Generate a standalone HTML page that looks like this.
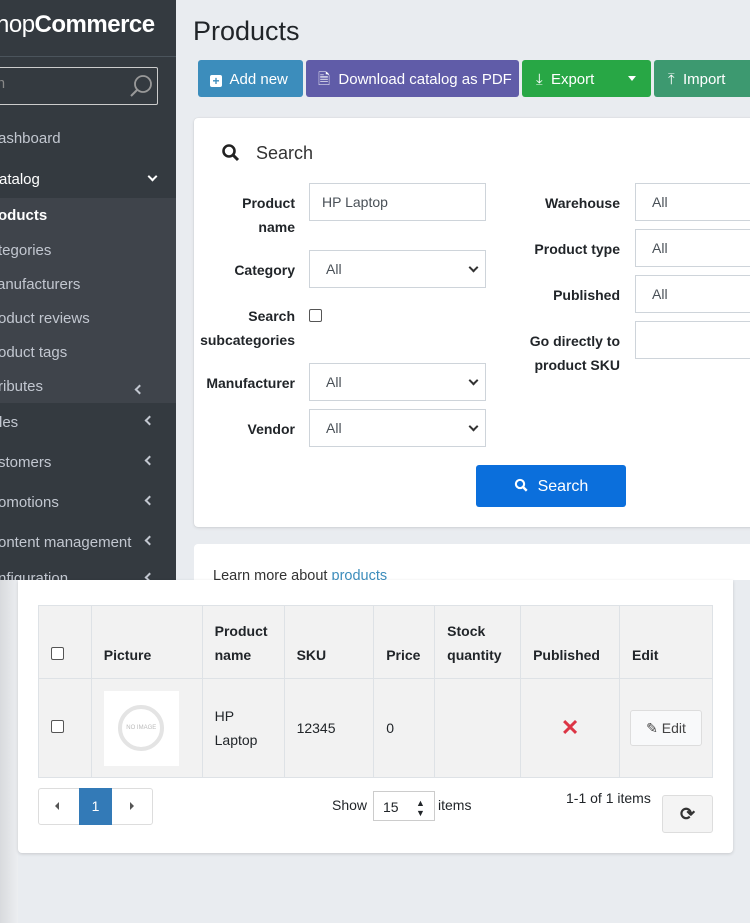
<!DOCTYPE html>
<html><head><meta charset="utf-8"><style>
*{box-sizing:border-box;margin:0;padding:0}
body{width:750px;height:923px;overflow:hidden;background:#e9ecf0;font-family:"Liberation Sans",sans-serif;font-size:14px;color:#212529;position:relative}
.a{position:absolute;white-space:nowrap}
.side{position:absolute;left:0;top:0;width:176px;height:580px;background:#343a40;overflow:hidden;color:#c2c7d0;font-size:14.5px}
.side .it{position:absolute;left:0}
.chev{position:absolute;left:146px;width:7px;height:7px;border-left:2px solid #c2c7d0;border-bottom:2px solid #c2c7d0;transform:rotate(45deg)}
.btn{position:absolute;top:60px;height:37px;border-radius:3px;color:#fff;font-size:15px;line-height:39px;padding-left:12px}
.lbl{position:absolute;text-align:right;font-weight:bold;font-size:14px;line-height:24px;color:#212529}
.inp{position:absolute;height:38px;border:1px solid #ced4da;background:#fff;font-size:14px;color:#495057;line-height:36px;padding-left:12px}
.sel::after{content:"";position:absolute;right:8px;top:13px;width:5px;height:5px;border-right:2px solid #333;border-bottom:2px solid #333;transform:rotate(45deg)}
table{position:absolute;left:38px;top:605px;width:675px;border-collapse:collapse;font-size:14px}
td,th{border:1px solid #dee2e6;background:#f2f2f2;padding:0 12px;text-align:left;line-height:24px}
th{font-weight:bold;height:73px;vertical-align:bottom;padding-bottom:11px}
td{height:99px}
.cb{display:inline-block;width:13px;height:13px;border:1px solid #555;border-radius:2px;background:#fff}
</style></head><body>
<div class="side">
 <div class="a" style="left:-4px;top:11px;color:#fff;font-size:24px;letter-spacing:-0.5px">nop<b>Commerce</b></div>
 <div class="a" style="left:0;top:56px;width:176px;height:1px;background:#4b545c"></div>
 <div class="a" style="left:-2px;top:67px;width:160px;height:38px;border:1px solid #ccc;border-radius:2px"></div>
 <div class="a" style="left:-3px;top:76px;color:#888">n</div>
 <svg class="a" style="left:128px;top:73px" width="26" height="26" viewBox="0 0 26 26"><circle cx="15" cy="11" r="8" fill="none" stroke="#999" stroke-width="1.8"/><line x1="9" y1="17" x2="3" y2="23" stroke="#999" stroke-width="2"/></svg>
 <div class="it a" style="top:130px;left:-2px;font-size:15px">ashboard</div>
 <div class="it a" style="top:171px;left:-1px;color:#fff;font-size:15px">atalog</div><div class="chev" style="top:173px;left:149px;transform:rotate(-45deg);border-color:#fff"></div>
 <div class="a" style="left:0;top:198px;width:176px;height:205px;background:#3f444b"></div>
 <div class="it a" style="top:207px;left:-2px;color:#fff;font-weight:bold;font-size:15px">oducts</div>
 <div class="it a" style="top:242px;left:-2px;font-size:15px">tegories</div>
 <div class="it a" style="top:276px;left:-3px;font-size:15px">anufacturers</div>
 <div class="it a" style="top:310px;left:-2px;font-size:15px">oduct reviews</div>
 <div class="it a" style="top:344px;left:-2px;font-size:15px">oduct tags</div>
 <div class="it a" style="top:378px;left:-2px;font-size:15px">ributes</div><div class="chev" style="top:386px;left:136px"></div>
 <div class="it a" style="top:414px;left:-1px;font-size:15px">les</div><div class="chev" style="top:417px"></div>
 <div class="it a" style="top:454px;left:-2px;font-size:15px">stomers</div><div class="chev" style="top:457px"></div>
 <div class="it a" style="top:494px;left:-2px;font-size:15px">omotions</div><div class="chev" style="top:497px"></div>
 <div class="it a" style="top:534px;left:-2px;font-size:15px">ontent management</div><div class="chev" style="top:537px"></div>
 <div class="it a" style="top:570px;left:-2px;font-size:15px">nfiguration</div><div class="chev" style="top:574px"></div>
</div>
<div class="a" style="left:193px;top:16px;font-size:27px;color:#212529">Products</div>
<div class="btn" style="left:198px;width:105px;background:#3c8dbc"><span style="display:inline-block;width:12px;height:12px;background:#fff;border-radius:2px;color:#3c8dbc;font-size:12px;line-height:12px;text-align:center;font-weight:bold;vertical-align:-1px">+</span>&nbsp; Add new</div>
<div class="btn" style="left:306px;width:213px;background:#605ca8">🗎&nbsp; Download catalog as PDF</div>
<div class="btn" style="left:522px;width:129px;background:#28a745;padding-left:14px">⤓&nbsp; Export<span style="position:absolute;left:106px;top:16px;border-left:4px solid transparent;border-right:4px solid transparent;border-top:5px solid #fff"></span></div>
<div class="btn" style="left:654px;width:100px;background:#3d9970;padding-left:14px">⤒&nbsp; Import</div>
<div class="a" style="left:194px;top:118px;width:570px;height:409px;background:#fff;border-radius:4px;box-shadow:0 0 1px rgba(0,0,0,.15),0 1px 3px rgba(0,0,0,.1)"></div>
<svg class="a" style="left:221px;top:143px" width="20" height="20" viewBox="0 0 20 20"><circle cx="8" cy="8" r="5.5" fill="none" stroke="#222" stroke-width="2.6"/><line x1="12" y1="12" x2="17" y2="17" stroke="#222" stroke-width="3"/></svg>
<div class="a" style="left:256px;top:143px;font-size:18px;color:#333">Search</div>
<div class="lbl" style="left:195px;width:100px;top:191px">Product<br>name</div>
<div class="inp" style="left:309px;top:183px;width:177px">HP Laptop</div>
<div class="lbl" style="left:195px;width:100px;top:258px">Category</div>
<div class="inp sel" style="left:309px;top:250px;width:177px;padding-left:16px">All</div>
<div class="lbl" style="left:195px;width:100px;top:304px">Search<br>subcategories</div>
<div class="a" style="left:309px;top:309px;width:13px;height:13px;border:1px solid #555;border-radius:2px"></div>
<div class="lbl" style="left:195px;width:100px;top:371px">Manufacturer</div>
<div class="inp sel" style="left:309px;top:363px;width:177px;padding-left:16px">All</div>
<div class="lbl" style="left:195px;width:100px;top:417px">Vendor</div>
<div class="inp sel" style="left:309px;top:409px;width:177px;padding-left:16px">All</div>
<div class="lbl" style="left:500px;width:120px;top:191px">Warehouse</div>
<div class="inp" style="left:635px;top:183px;width:130px;padding-left:16px">All</div>
<div class="lbl" style="left:500px;width:120px;top:237px">Product type</div>
<div class="inp" style="left:635px;top:229px;width:130px;padding-left:16px">All</div>
<div class="lbl" style="left:500px;width:120px;top:283px">Published</div>
<div class="inp" style="left:635px;top:275px;width:130px;padding-left:16px">All</div>
<div class="lbl" style="left:500px;width:120px;top:329px">Go directly to<br>product SKU</div>
<div class="inp" style="left:635px;top:321px;width:130px"></div>
<div class="a" style="left:476px;top:465px;width:150px;height:42px;background:#0b6fdc;border-radius:3px;color:#fff;font-size:16px;line-height:44px;text-align:center"><svg width="15" height="15" viewBox="0 0 20 20" style="vertical-align:-2px"><circle cx="8" cy="8" r="5.5" fill="none" stroke="#fff" stroke-width="2.8"/><line x1="12" y1="12" x2="17" y2="17" stroke="#fff" stroke-width="3.2"/></svg>&nbsp; Search</div>
<div class="a" style="left:194px;top:544px;width:570px;height:36px;background:#fff;border-radius:4px 4px 0 0"></div>
<div class="a" style="left:213px;top:568px;font-size:14.5px;color:#333">Learn more about <span style="color:#3c8dbc">products</span></div>
<div class="a" style="left:0;top:580px;width:18px;height:343px;background:linear-gradient(90deg,#d8dadd,#eceef1)"></div>
<div class="a" style="left:18px;top:580px;width:715px;height:273px;background:#fff;border-radius:0 0 4px 4px;box-shadow:0 1px 3px rgba(0,0,0,.15)"></div>
<table>
<tr><th style="width:53px"><span class="cb"></span></th><th style="width:111px">Picture</th><th style="width:82px">Product<br>name</th><th style="width:90px">SKU</th><th style="width:61px">Price</th><th style="width:86px">Stock<br>quantity</th><th style="width:99px">Published</th><th>Edit</th></tr>
<tr><td><span class="cb"></span></td><td><div style="width:75px;height:75px;background:#fff;display:flex;align-items:center;justify-content:center"><div style="width:46px;height:46px;border:4px solid #e4e4e4;border-radius:50%;font-size:6px;color:#bbb;text-align:center;line-height:38px">NO IMAGE</div></div></td><td>HP<br>Laptop</td><td>12345</td><td>0</td><td></td><td style="text-align:center;color:#dc3545;font-size:22px;font-weight:bold">✕</td><td style="padding:0 10px"><div style="width:72px;height:36px;border:1px solid #ddd;border-radius:3px;background:#f8f9fa;text-align:center;line-height:34px;color:#444">✎ Edit</div></td></tr>
</table>
<div class="a" style="left:38px;top:788px;width:115px;height:37px;border:1px solid #ddd;border-radius:3px;background:#fff"></div>
<div class="a" style="left:55px;top:802px;border-top:4px solid transparent;border-bottom:4px solid transparent;border-right:4px solid #555"></div>
<div class="a" style="left:79px;top:788px;width:33px;height:37px;background:#337ab7;color:#fff;line-height:37px;text-align:center">1</div>
<div class="a" style="left:130px;top:802px;border-top:4px solid transparent;border-bottom:4px solid transparent;border-left:4px solid #555"></div>
<div class="a" style="left:332px;top:797px">Show</div>
<div class="a" style="left:373px;top:791px;width:62px;height:30px;border:1px solid #ccc;padding-left:9px;line-height:30px">15<span style="position:absolute;left:42px;top:0;font-size:9px;line-height:10px;top:6px">▲<br>▼</span></div>
<div class="a" style="left:438px;top:797px">items</div>
<div class="a" style="left:566px;top:790px">1-1 of 1 items</div>
<div class="a" style="left:662px;top:795px;width:51px;height:38px;border:1px solid #ddd;border-radius:3px;background:#f4f4f4;text-align:center;line-height:36px;font-size:18px;font-weight:bold;color:#333">⟳</div>
</body></html>
